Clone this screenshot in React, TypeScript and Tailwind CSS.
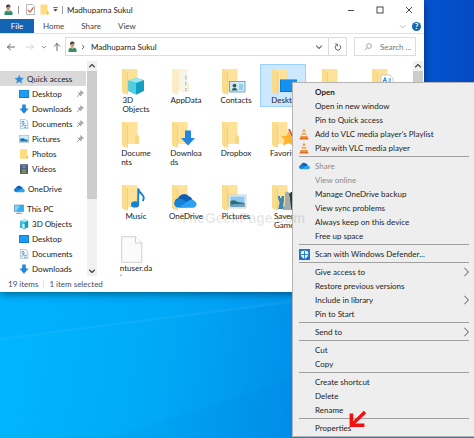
import type { ReactNode } from "react";

const stroke = { fill: "none", strokeLinecap: "round", strokeLinejoin: "round" } as const;

function UserIcon() {
  return (
    <svg viewBox="0 0 9 11" className="h-[11px] w-[9px] shrink-0" aria-hidden="true">
      <path d="M0.5 11V8.6Q1 7 3 6.6L4.5 8 6 6.6Q8 7 8.5 8.6V11Z" fill="#2f8f6b" />
      <path d="M3.2 5h2.2v2L4.3 8.2 3.2 7Z" fill="#e0a27c" />
      <ellipse cx="4.2" cy="3.6" rx="1.9" ry="2.4" fill="#c98c68" />
      <path d="M2.2 3.4Q1.8 0.4 4.4 0.4 7 0.6 6.4 3.6L5.6 2.2Q4 2.4 2.2 3.4Z" fill="#3b3330" />
    </svg>
  );
}

function FolderIcon({ faded = false, children }: { faded?: boolean; children?: ReactNode }) {
  return (
    <svg viewBox="0 0 26 28" className="h-[28px] w-[26px]" aria-hidden="true">
      <g opacity={faded ? 0.5 : 1}>
        <path d="M1 1H16.2V14L17.6 15.6V22.6H4V26.5L1 23.5Z" fill="#f5d27a" />
        <path d="M2.5 1H16.2V14L17.8 15.8V22.8H7Z" fill="#ffe29a" />
        <path d="M14 16L16 13.8 17.8 15.8V22.8H14Z" fill="#f8d784" />
        <path d="M1 1L6.6 4V26.8L1 23.4Z" fill="#f9dc8c" />
        <path d="M6.6 4V26.8" stroke="#ecc566" strokeWidth="0.5" />
      </g>
      {children}
    </svg>
  );
}

function SmallFolder() {
  return (
    <svg viewBox="0 0 9 11" className="h-[11px] w-[9px] shrink-0" aria-hidden="true">
      <path d="M0.5 0.5H7.6V7L8.6 8V10.5H0.5Z" fill="#ffdc82" />
      <path d="M7 7V10.5H8.6V8Z" fill="#efc35a" />
    </svg>
  );
}

const cube = (
  <>
    <path d="M7.5 12.5L15.5 10 23 12.3V22.7L15.2 26.4 7.5 23Z" fill="#1fb4cf" />
    <path d="M7.5 12.5L15.5 10 23 12.3 15.2 15Z" fill="#9ce8f2" />
    <path d="M7.5 12.5L15.2 15V26.4L7.5 23Z" fill="#4fd0e2" />
    <path d="M15.2 15L23 12.3V22.7L15.2 26.4Z" fill="#139fc0" />
  </>
);

const cloud = (
  <>
    <path d="M6 20.5a4.2 4.2 0 0 1 .2-8.2A6.4 6.4 0 0 1 17 10.2a5 5 0 0 1 3.4 3.2L12 20.5Z" fill="#0f5fb8" />
    <path d="M6 21.5a4 4 0 0 1-1.5-7.6Q8 11.7 11.5 14L20 18 14 21.5Z" fill="#1683d8" />
    <path d="M6.4 21.8L17 14.4Q20.6 12.4 23 15.4a3.5 3.5 0 0 1-1.8 6.4Z" fill="#2ba3ee" />
  </>
);

function CloudIcon() {
  return (
    <svg viewBox="2 7 23 16" className="h-[8px] w-[11px] shrink-0" aria-hidden="true">
      {cloud}
    </svg>
  );
}

function SideIcon({ name }: { name: string }) {
  const drawings: Record<string, ReactNode> = {
    star: (
      <path d="M5.2 0.8L6.6 3.8 9.8 4 7.4 6.2 8.2 9.5 5.2 7.8 2.4 9.4 3 6.3 0.6 4.1 3.9 3.8Z" fill="#2f8fdb" />
    ),
    desktop: (
      <>
        <rect x="0" y="1" width="10" height="8" fill="#0b79d8" />
        <rect x="0.6" y="1.6" width="8.8" height="6.4" fill="#1f9bf5" />
      </>
    ),
    downloads: <path d="M3.2 0.4H6.8V4.6H9.6L5 9.8 0.4 4.6H3.2Z" fill="#2486de" />,
    documents: (
      <>
        <path d="M1.4 0.3H6.4L8.8 2.6V9.8H1.4Z" fill="#eef6fb" stroke="#7aa4bd" strokeWidth="0.6" />
        <path d="M2.8 2.6H5M2.8 4.2H5.5M3 7.6L5 4.6M5.2 8.3H7.4M5.4 6.4H7.4" stroke="#2f92cf" strokeWidth="0.9" fill="none" />
      </>
    ),
    pictures: (
      <>
        <rect x="0.3" y="1.5" width="9.4" height="7" fill="#d6ecf8" stroke="#8fb4c9" strokeWidth="0.6" />
        <path d="M1.2 7.6V5L3.8 3.8 6 5.4 8.8 6V7.6Z" fill="#256b9c" />
        <path d="M1.2 5L4 4.4 8.8 6" stroke="#59aede" strokeWidth="0.8" fill="none" />
      </>
    ),
    photos: (
      <>
        <path d="M1 0.3H8V6.4L9 7.4V9.8H1Z" fill="#ffdb80" />
        <path d="M7.6 6.6V9.8H9V7.5Z" fill="#edc15a" />
      </>
    ),
    videos: (
      <>
        <rect x="1" y="0.3" width="8" height="9.5" fill="#39404a" />
        <rect x="2.8" y="0.8" width="4.4" height="3.8" fill="#5e7fbf" />
        <rect x="2.8" y="5.2" width="4.4" height="3.8" fill="#7a8f5c" />
        <path d="M1.9 1V9.4M8.1 1V9.4" stroke="#c9ced4" strokeWidth="0.7" strokeDasharray="0.9 0.9" />
      </>
    ),
    pc: (
      <>
        <rect x="0.3" y="1" width="9.4" height="6.4" fill="#38aef0" stroke="#6b8b9e" strokeWidth="0.6" />
        <path d="M0.8 1.4H6L2.6 7H0.8Z" fill="#7fd0fa" />
        <path d="M2 9.4H8M5 7.4V9" stroke="#7f95a3" strokeWidth="0.9" />
      </>
    ),
    objects: (
      <>
        <path d="M1 2L5.4 0.6 9.2 1.8V8.4L5.6 9.8 1 8.4Z" fill="#139fc0" />
        <path d="M1 2L5.6 3.2V9.8L1 8.4Z" fill="#35bdd4" />
        <path d="M1 2L5.4 0.6 9.2 1.8 5.6 3.2Z" fill="#a6ecf4" />
        <path d="M3.4 4.6L5.6 5.2V9L3.4 8.4Z" fill="#e0fafd" />
      </>
    ),
  };
  return (
    <svg viewBox="0 0 10 10" className="size-[10px] shrink-0" aria-hidden="true">
      {drawings[name]}
    </svg>
  );
}

function Pin() {
  return (
    <svg viewBox="0 0 7 7" className="size-[7px] shrink-0" aria-hidden="true">
      <path d="M0.5 6.5L2.6 4.4M1.4 3L4 5.6M2.2 3.6L4.4 1.2M3.6 5L5.9 2.7M3.9 0.8L6.3 3.2" stroke="#7b838c" strokeWidth="0.9" {...stroke} />
      <path d="M2.2 3.6L4.4 1.2 5.9 2.7 3.6 5Z" fill="#a3aab2" />
    </svg>
  );
}

function Chevron({ dir, className }: { dir: "up" | "down" | "right"; className: string }) {
  const d = { up: "M1.5 5L4 2.5 6.5 5", down: "M1.5 3L4 5.5 6.5 3", right: "M3 1.5L5.5 4 3 6.5" }[dir];
  return (
    <svg viewBox="0 0 8 8" className={className} aria-hidden="true">
      <path d={d} stroke="currentColor" strokeWidth="1.1" {...stroke} />
    </svg>
  );
}

const sidebar = [
  { icon: "star", label: "Quick access", top: true, selected: true },
  { icon: "desktop", label: "Desktop", pin: true },
  { icon: "downloads", label: "Downloads", pin: true },
  { icon: "documents", label: "Documents", pin: true },
  { icon: "pictures", label: "Pictures", pin: true },
  { icon: "photos", label: "Photos" },
  { icon: "videos", label: "Videos" },
  { icon: "cloud", label: "OneDrive", top: true },
  { icon: "pc", label: "This PC", top: true },
  { icon: "objects", label: "3D Objects" },
  { icon: "desktop", label: "Desktop" },
  { icon: "documents", label: "Documents" },
  { icon: "downloads", label: "Downloads" },
];

function Sidebar() {
  return (
    <nav className="flex w-[86px] shrink-0 flex-col pt-[10px]" aria-label="Folders">
      {sidebar.map((row, i) => (
        <button
          key={i}
          type="button"
          className={`flex h-[15px] shrink-0 items-center gap-[3px] pr-[2px] text-left ${
            row.selected ? "bg-[#d9d9d9] pl-[14px]" : row.top ? "mt-[5px] pl-[14px]" : "pl-[19px]"
          }`}
        >
          {row.icon === "cloud" ? <CloudIcon /> : <SideIcon name={row.icon} />}
          <span className="flex-1 whitespace-nowrap">{row.label}</span>
          {row.pin && <Pin />}
        </button>
      ))}
    </nav>
  );
}

type Item = { lines: string[]; art: ReactNode; selected?: boolean };

const items: Item[] = [
  { lines: ["3D", "Objects"], art: <FolderIcon>{cube}</FolderIcon> },
  {
    lines: ["AppData"],
    art: (
      <FolderIcon faded>
        <path d="M9 3.5L17 2V24L12 25.5 9 22Z" fill="#f7f4ea" />
        <path d="M14.8 8V12M14.8 14V18M15 20V23" stroke="#9aa4ad" strokeWidth="1.3" strokeDasharray="1.2 0.8" />
      </FolderIcon>
    ),
  },
  {
    lines: ["Contacts"],
    art: (
      <FolderIcon>
        <rect x="8.5" y="13.5" width="15.5" height="10.5" fill="#cfe9f8" stroke="#4d9ac4" strokeWidth="0.8" />
        <path d="M10.5 22.5Q11 19.8 13.5 19.8T16.5 22.5Z" fill="#2c6a58" />
        <circle cx="13.5" cy="17.6" r="1.9" fill="#3f5a54" />
        <path d="M18 17H22M18 19H22M18 21H22" stroke="#4d9ac4" strokeWidth="0.8" />
      </FolderIcon>
    ),
  },
  {
    lines: ["Desktop"],
    selected: true,
    art: (
      <FolderIcon>
        <rect x="9" y="11.5" width="17" height="12.5" fill="#0c6fc9" />
        <rect x="9.6" y="12" width="16.4" height="11" fill="#1590f0" />
      </FolderIcon>
    ),
  },
  { lines: [], art: <FolderIcon /> },
  {
    lines: [],
    art: (
      <FolderIcon>
        <path d="M10 7H19L22 10V22H10Z" fill="#fff" stroke="#9fb4c2" strokeWidth="0.6" />
        <path d="M12 14L14 9.5 15.5 14M12.8 12.6H15M17.5 11H20M17.5 13H20M11 15.5H21" stroke="#2486de" strokeWidth="1" fill="none" />
      </FolderIcon>
    ),
  },
  { lines: ["Docume", "nts"], art: <FolderIcon /> },
  {
    lines: ["Downloa", "ds"],
    art: (
      <FolderIcon>
        <path d="M14 9.5H20V17H24L17 24.5 10 17H14Z" fill="#2486de" />
      </FolderIcon>
    ),
  },
  { lines: ["Dropbox"], art: <FolderIcon /> },
  {
    lines: ["Favorites"],
    art: (
      <FolderIcon>
        <path d="M18 8L22 17" stroke="#e2452f" strokeWidth="1.8" />
        <path d="M17.5 10L20 15 25.5 15.5 21.5 19 22.5 25 17.5 22 12 24.5 13.6 19 10 15 15.5 15Z" fill="#ffb52b" />
      </FolderIcon>
    ),
  },
  { lines: [], art: null },
  { lines: [], art: null },
  {
    lines: ["Music"],
    art: (
      <FolderIcon>
        <path d="M17.2 20V4.5Q18 8.4 21 10.4 24 13 21.8 17" stroke="#1580d6" strokeWidth="1.9" fill="none" />
        <ellipse cx="14" cy="20.4" rx="4" ry="3.2" fill="#1580d6" />
      </FolderIcon>
    ),
  },
  { lines: ["OneDrive"], art: <FolderIcon><g transform="translate(1 2)">{cloud}</g></FolderIcon> },
  {
    lines: ["Pictures"],
    art: (
      <FolderIcon>
        <rect x="8" y="11" width="17" height="13" fill="#f6fafc" stroke="#a8b6bf" strokeWidth="0.6" />
        <rect x="9.4" y="12.4" width="14.2" height="10.2" fill="#8cc8f0" />
        <path d="M9.4 17Q13 15 17 18L23.6 19V22.6H9.4Z" fill="#2c6f78" />
        <path d="M9.4 20.5L23.6 19.5V22.6H9.4Z" fill="#6e9fc0" />
      </FolderIcon>
    ),
  },
  {
    lines: ["Saved", "Games"],
    art: (
      <FolderIcon>
        <path d="M7 14V12H9V14H10.5V12H13V17L12 22 14 25H7L8.6 19Z" fill="#3f86b0" />
        <path d="M14 9Q16 6 18.5 9L18 13 20 20 21 26H12L14 19Z" fill="#a3adb0" />
        <path d="M18 10Q21 6 25 9V26H20.5L19 16Z" fill="#30383c" />
      </FolderIcon>
    ),
  },
  { lines: [], art: null },
  { lines: [], art: null },
  {
    lines: ["ntuser.da", "t"],
    art: (
      <svg viewBox="0 0 26 28" className="h-[28px] w-[26px]" aria-hidden="true">
        <path d="M0.7 0.7H14.5L20.8 7V26.3H0.7Z" fill="#fbfbfb" stroke="#c4c4c4" strokeWidth="0.8" />
        <path d="M14.5 0.7V7H20.8" fill="#fff" stroke="#c4c4c4" strokeWidth="0.8" />
      </svg>
    ),
  },
];

function Files() {
  return (
    <div className="h-[215px] min-w-0 flex-1 overflow-hidden pt-[3px] pl-[13px]">
      <div className="grid grid-cols-[repeat(6,50px)] grid-rows-[53px_63px_52px_48px]">
        {items.map((item, i) => (
          <div
            key={i}
            className={`h-[43px] w-[46px] pt-[4px] ${item.selected ? "bg-[#cce8ff] outline outline-[#99d1ff] -outline-offset-1" : ""}`}
          >
            <div className="h-[28px] pl-[11px]">{item.art}</div>
            <div className="flex justify-center pl-[6px]">
              <span className="text-left leading-[9px] whitespace-nowrap">
                {item.lines.map((line) => (
                  <span key={line} className="block">
                    {line}
                  </span>
                ))}
              </span>
            </div>
          </div>
        ))}
      </div>
    </div>
  );
}

function Cone() {
  return (
    <svg viewBox="0 0 10 11" className="h-[11px] w-[10px]" aria-hidden="true">
      <path d="M4.2 0.5H5.8L8 8H2Z" fill="#f08a24" />
      <path d="M3.7 2.4H6.3L6.8 4.2H3.2ZM2.7 5.6H7.3L7.7 7H2.3Z" fill="#f6efe8" />
      <path d="M1.6 7.4H8.4L9.6 10.4H0.4Z" fill="#e06f1c" />
      <path d="M2.6 7.4H7.4L7.8 8.4H2.2Z" fill="#f6b26b" />
    </svg>
  );
}

function Shield() {
  return (
    <svg viewBox="0 0 11 11" className="size-[11px]" aria-hidden="true">
      <rect width="11" height="11" fill="#1e74c9" />
      <path d="M1.8 2.4Q4 2.2 5.5 1.3 7 2.2 9.2 2.4V6Q8.8 8.8 5.5 10 2.2 8.8 1.8 6Z" fill="#eaf5ff" />
      <path d="M5.5 1.6V9.8M2 5.5H9" stroke="#1e74c9" strokeWidth="0.9" />
    </svg>
  );
}

type Entry = { label: string; icon?: ReactNode; bold?: boolean; disabled?: boolean; more?: boolean };

const menu: Entry[][] = [
  [
    { label: "Open", bold: true },
    { label: "Open in new window" },
    { label: "Pin to Quick access" },
    { label: "Add to VLC media player's Playlist", icon: <Cone /> },
    { label: "Play with VLC media player", icon: <Cone /> },
  ],
  [
    { label: "Share", icon: <CloudIcon />, disabled: true },
    { label: "View online", disabled: true },
    { label: "Manage OneDrive backup" },
    { label: "View sync problems" },
    { label: "Always keep on this device" },
    { label: "Free up space" },
  ],
  [{ label: "Scan with Windows Defender...", icon: <Shield /> }],
  [
    { label: "Give access to", more: true },
    { label: "Restore previous versions" },
    { label: "Include in library", more: true },
    { label: "Pin to Start" },
  ],
  [{ label: "Send to", more: true }],
  [{ label: "Cut" }, { label: "Copy" }],
  [{ label: "Create shortcut" }, { label: "Delete" }, { label: "Rename" }],
  [{ label: "Properties" }],
];

function ContextMenu() {
  return (
    <div
      role="menu"
      className="absolute top-[82px] right-0 left-[292px] border border-r-0 border-[#b4b4b4] bg-[#eeeeee] pt-[2px] pr-[5px] pb-px pl-[6px]"
    >
      {menu.map((group, g) => (
        <div key={g} className={g > 0 ? "mt-px border-t border-[#a0a0a0] pt-[2px]" : ""}>
          {group.map((entry) => (
            <button
              key={entry.label}
              type="button"
              role="menuitem"
              disabled={entry.disabled}
              className={`flex h-[14px] w-full items-center text-left whitespace-nowrap ${
                entry.disabled ? "text-[#8a8a8a]" : "text-[#1c1c1c]"
              } ${entry.bold ? "font-bold" : ""}`}
            >
              <span className="flex w-[16px] shrink-0">{entry.icon}</span>
              <span className="flex-1">{entry.label}</span>
              {entry.more && (
                <svg viewBox="0 0 5 10" className="h-[10px] w-[5px]" aria-hidden="true">
                  <path d="M0.6 1L4.4 5 0.6 9" stroke="#444" strokeWidth="0.9" {...stroke} />
                </svg>
              )}
            </button>
          ))}
        </div>
      ))}
    </div>
  );
}

function Wallpaper() {
  return (
    <svg className="absolute inset-0 size-full" viewBox="0 0 474 438" preserveAspectRatio="none" aria-hidden="true">
      <defs>
        <linearGradient id="sky" gradientUnits="userSpaceOnUse" x1="0" y1="370" x2="320" y2="420">
          <stop offset="0" stopColor="#00b6fe" />
          <stop offset="0.5" stopColor="#00a8f6" />
          <stop offset="1" stopColor="#008ae8" />
        </linearGradient>
        <linearGradient id="deep" x1="0" y1="0" x2="1" y2="0">
          <stop offset="0" stopColor="#0655d2" />
          <stop offset="1" stopColor="#044ac2" />
        </linearGradient>
      </defs>
      <rect width="474" height="438" fill="url(#sky)" />
      <rect x="420" width="54" height="120" fill="url(#deep)" />
      <path d="M0 338L300 299V280H0Z" fill="#00a6ff" opacity="0.25" />
      <path d="M0 338L300 299V302L0 340Z" fill="#3cc0ff" opacity="0.2" />
      <path d="M110 438L300 376V438Z" fill="#0078dc" opacity="0.08" />
    </svg>
  );
}

export default function App() {
  return (
    <div className="relative min-h-screen overflow-hidden bg-[#0098f0] font-['Lato','Open_Sans',sans-serif] text-[8px] leading-[10px] text-[#222]">
      <Wallpaper />
      <section className="relative mr-[50px] bg-white shadow-[0_2px_8px_rgba(0,0,0,0.45)]" aria-label="File Explorer">
        <header className="flex h-[19px] items-center pl-[4px]">
          <UserIcon />
          <span className="ml-[5px] h-[8px] w-px bg-[#9a9a9a]" />
          <svg viewBox="0 0 9 11" className="ml-[7px] h-[11px] w-[9px]" aria-hidden="true">
            <path d="M0.5 0.5H6.5L8.5 2.5V10.5H0.5Z" fill="#fdfdfd" stroke="#9b9b9b" strokeWidth="0.7" />
            <path d="M2 6L4 8.2 7.2 3.6" stroke="#d9502e" strokeWidth="1.1" {...stroke} />
          </svg>
          <span className="ml-[5px]">
            <SmallFolder />
          </span>
          <svg viewBox="0 0 5 5" className="ml-[4px] size-[5px]" aria-hidden="true">
            <path d="M0.3 0.6H4.7" stroke="#333" strokeWidth="0.8" />
            <path d="M0.3 2.2H4.7L2.5 4.5Z" fill="#333" />
          </svg>
          <span className="ml-[4px] h-[8px] w-px bg-[#9a9a9a]" />
          <h1 className="ml-[4px] flex-1 whitespace-nowrap">Madhuparna Sukul</h1>
          <div className="flex items-center gap-[21px] pr-[11px] text-[#333]">
            <button type="button" aria-label="Minimize">
              <svg viewBox="0 0 8 8" className="size-[8px]">
                <path d="M1 4.5H7" stroke="currentColor" strokeWidth="0.9" />
              </svg>
            </button>
            <button type="button" aria-label="Maximize">
              <svg viewBox="0 0 8 8" className="size-[8px]">
                <rect x="1" y="1" width="6" height="6" fill="none" stroke="currentColor" strokeWidth="0.9" />
              </svg>
            </button>
            <button type="button" aria-label="Close">
              <svg viewBox="0 0 8 8" className="size-[8px]">
                <path d="M1 1L7 7M7 1L1 7" stroke="currentColor" strokeWidth="0.9" />
              </svg>
            </button>
          </div>
        </header>

        <div className="flex h-[15px] items-center border-b border-[#e2e2e2] text-[#444]">
          <button type="button" className="h-[14px] w-[34px] bg-[#1464b4] text-white">
            File
          </button>
          <button type="button" className="ml-[9px]">
            Home
          </button>
          <button type="button" className="ml-[17px]">
            Share
          </button>
          <button type="button" className="ml-[17px]">
            View
          </button>
          <span className="flex-1" />
          <Chevron dir="down" className="size-[7px] text-[#9fb0bf]" />
          <button
            type="button"
            aria-label="Help"
            className="mr-[3px] ml-[6px] flex size-[9px] items-center justify-center rounded-full bg-[#1468b8] text-[8px] font-bold text-white"
          >
            ?
          </button>
        </div>

        <div className="flex h-[27px] items-center pt-[3px] pr-[8px] pb-[5px] pl-[6px] text-[#444]">
          <svg viewBox="0 0 10 8" className="h-[8px] w-[10px]" aria-hidden="true">
            <path d="M1.5 4H8.5M4.5 1.2L1.5 4 4.5 6.8" stroke="#555" strokeWidth="0.9" {...stroke} />
          </svg>
          <svg viewBox="0 0 10 8" className="ml-[9px] h-[8px] w-[10px]" aria-hidden="true">
            <path d="M1.5 4H8.5M5.5 1.2L8.5 4 5.5 6.8" stroke="#d0d0d0" strokeWidth="0.9" {...stroke} />
          </svg>
          <Chevron dir="down" className="ml-[6px] size-[6px] text-[#777]" />
          <svg viewBox="0 0 8 10" className="ml-[6px] h-[10px] w-[8px]" aria-hidden="true">
            <path d="M4 8.5V1.5M1.2 4.3L4 1.5 6.8 4.3" stroke="#555" strokeWidth="0.9" {...stroke} />
          </svg>
          <div className="ml-[4px] flex h-[19px] flex-1 items-center border border-[#dcdcdc] pl-[2px]">
            <UserIcon />
            <Chevron dir="right" className="ml-[3px] size-[6px]" />
            <button type="button" className="ml-[5px] flex-1 text-left whitespace-nowrap text-[#222]">
              Madhuparna Sukul
            </button>
            <Chevron dir="down" className="mr-[5px] size-[8px] text-[#777]" />
            <button type="button" aria-label="Refresh" className="flex h-full w-[18px] items-center justify-center border-l border-[#dcdcdc]">
              <svg viewBox="0 0 8 8" className="size-[8px]">
                <path d="M2.2 2.2A2.8 2.8 0 1 0 5.8 2.2M1.6 1H3.4V3" stroke="#555" strokeWidth="0.9" {...stroke} />
              </svg>
            </button>
          </div>
          <label className="ml-[7px] flex h-[19px] w-[62px] items-center border border-[#dcdcdc] pl-[9px]">
            <svg viewBox="0 0 8 8" className="size-[8px] shrink-0" aria-label="Search">
              <circle cx="5" cy="3" r="2.4" stroke="#8a8f94" strokeWidth="0.8" fill="none" />
              <path d="M3.2 4.8L0.8 7.2" stroke="#8a8f94" strokeWidth="0.8" />
            </svg>
            <input
              type="text"
              placeholder="Search ..."
              className="ml-[8px] w-full min-w-0 bg-transparent outline-none placeholder:text-[#777]"
            />
          </label>
        </div>

        <div className="flex">
          <Sidebar />
          <div className="ml-px flex w-[10px] shrink-0 flex-col items-center bg-[#f0f0f0] text-[#444]">
            <Chevron dir="up" className="my-px size-[8px]" />
            <span className="h-[128px] w-full bg-[#cdcdcd]" />
            <span className="flex-1" />
            <Chevron dir="down" className="my-px size-[8px]" />
          </div>
          <Files />
          <div className="mr-px flex w-[10px] shrink-0 flex-col items-center bg-[#f0f0f0] text-[#444]">
            <Chevron dir="up" className="my-px size-[8px]" />
            <span className="h-[128px] w-full bg-[#cdcdcd]" />
          </div>
        </div>

        <footer className="flex h-[16px] items-center pl-[8px] text-[#3d4f6b]">
          <span>19 items</span>
          <span className="mx-[5px] h-[8px] w-px bg-[#e4e4e4]" />
          <span>1 item selected</span>
        </footer>
      </section>

      <ContextMenu />

      <p className="pointer-events-none absolute top-[210px] left-[180px] font-['Liberation_Sans',sans-serif] text-[14px] leading-[16px] font-bold text-black/10">
        TheGeekPage.com
      </p>
      <svg viewBox="0 0 18 18" className="pointer-events-none absolute top-[410px] left-[348px] size-[18px]" aria-hidden="true">
        <path d="M17 2L5 13.6" stroke="#f01010" strokeWidth="3.4" fill="none" />
        <path d="M3.4 3.6V15.2H16.4" stroke="#f01010" strokeWidth="3.6" fill="none" />
      </svg>
    </div>
  );
}
